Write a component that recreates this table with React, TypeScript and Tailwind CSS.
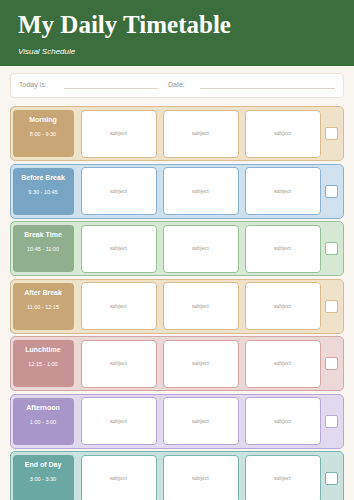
const rows = [
  { name: "Morning", time: "8:00 - 9:30", bg: "bg-[#efe2c9]", border: "border-[#d9bb8d]", label: "bg-[#c8a676]" },
  { name: "Before Break", time: "9:30 - 10:45", bg: "bg-[#cfe1ef]", border: "border-[#8cb2d2]", label: "bg-[#78a5c4]" },
  { name: "Break Time", time: "10:45 - 11:00", bg: "bg-[#d7e9d5]", border: "border-[#9ac29a]", label: "bg-[#8eb08c]" },
  { name: "After Break", time: "11:00 - 12:15", bg: "bg-[#efe2c9]", border: "border-[#d9bb8d]", label: "bg-[#c8a676]" },
  { name: "Lunchtime", time: "12:15 - 1:00", bg: "bg-[#edd7d7]", border: "border-[#d5a6a6]", label: "bg-[#c79393]" },
  { name: "Afternoon", time: "1:00 - 3:00", bg: "bg-[#e1d9ef]", border: "border-[#b9a6d8]", label: "bg-[#a697c8]" },
  { name: "End of Day", time: "3:00 - 3:30", bg: "bg-[#c9e2de]", border: "border-[#7ab6ad]", label: "bg-[#6aa9a1]" },
];

export default function App() {
  return (
    <div className="min-h-screen bg-[#f9f6f1] font-['Liberation_Sans',sans-serif]">
      <div className="h-[66px] bg-[#3c6e3d] px-[18px] pt-[11px]">
        <h1 className="font-['Liberation_Serif',serif] text-[25px] font-bold leading-[28px] text-white">
          My Daily Timetable
        </h1>
        <p className="mt-[8px] text-[8px] italic leading-[10px] text-white">Visual Schedule</p>
      </div>

      <div className="px-[10px]">
        <div className="mt-[7px] flex h-[25px] items-center rounded-[4px] border border-[#ece4d6] bg-white px-[8px] text-[7px] text-[#a09a92]">
          <span className="w-[45px]">Today is:</span>
          <div className="mt-[6px] h-px w-[94px] bg-[#ddd5c8]" />
          <span className="ml-[10px] w-[32px]">Date:</span>
          <div className="mt-[6px] h-px flex-1 bg-[#ddd5c8]" />
        </div>

        <div className="mt-[8px] flex flex-col gap-[2.5px]">
          {rows.map((r) => (
            <div
              key={r.name}
              className={`flex h-[55px] shrink-0 items-center rounded-[5px] border-[1.5px] pl-[1.5px] pr-[4.5px] ${r.bg} ${r.border}`}
            >
              <div className={`flex h-[47px] w-[61px] flex-col items-center rounded-[4px] pt-[5px] text-white ${r.label}`}>
                <span className="text-[7px] font-bold leading-[9px]">{r.name}</span>
                <span className="mt-[7px] text-[5.5px] leading-[7px]">{r.time}</span>
              </div>
              <div className="ml-[7px] flex gap-[6px]">
                {[0, 1, 2].map((i) => (
                  <div
                    key={i}
                    className={`flex h-[48px] w-[76px] items-center justify-center rounded-[4px] border bg-white font-['Liberation_Serif',serif] text-[6px] text-[#9a9490] ${r.border}`}
                  >
                    subject
                  </div>
                ))}
              </div>
              <div className={`ml-[4px] h-[13px] w-[13px] rounded-[2px] border bg-white ${r.border}`} />
            </div>
          ))}
        </div>
      </div>
    </div>
  );
}
